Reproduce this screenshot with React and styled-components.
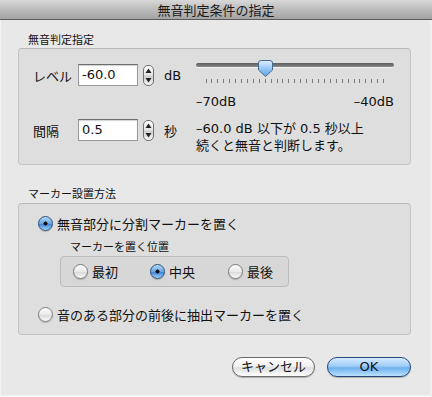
import React from 'react';
import styled, { createGlobalStyle } from 'styled-components';

const GlobalStyle = createGlobalStyle`
	body {
		margin: 0;
		background: #fff;
		font-family: 'DejaVu Sans', 'Noto Sans CJK JP', sans-serif;
		color: #111;
	}
`;

const TICKS = Array.from({ length: 31 });

const Dialog = () => {
	const level = -60;
	const min = -70;
	const max = -40;
	const knobLeft = 10 + ((level - min) / (max - min)) * 179 - 7.5;

	return (
		<Window>
			<GlobalStyle />
			<TitleBar>無音判定条件の指定</TitleBar>
			<Body>
				<GroupLabel>無音判定指定</GroupLabel>
				<Box>
					<LeftCol>
						<FieldRow>
							<FieldLabel>レベル</FieldLabel>
							<TextField>-60.0</TextField>
							<Stepper />
							<Unit>dB</Unit>
						</FieldRow>
						<FieldRow>
							<FieldLabel>間隔</FieldLabel>
							<TextField>0.5</TextField>
							<Stepper />
							<Unit>秒</Unit>
						</FieldRow>
					</LeftCol>
					<RightCol>
						<SliderWrap>
							<Track />
							<Ticks>
								{TICKS.map((_, i) => (
									<Tick key={i} />
								))}
							</Ticks>
							<Knob style={{ left: knobLeft }}>
								<svg width="15" height="17" viewBox="0 0 15 17">
									<defs>
										<linearGradient id="kg" x1="0" y1="0" x2="0" y2="1">
											<stop offset="0" stopColor="#e2f1ff" />
											<stop offset="0.45" stopColor="#9ccbf5" />
											<stop offset="1" stopColor="#5aa2e8" />
										</linearGradient>
									</defs>
									<path
										d="M3 0.5 H12 Q14.5 0.5 14.5 3 V10 L7.5 16.5 L0.5 10 V3 Q0.5 0.5 3 0.5 Z"
										fill="url(#kg)"
										stroke="#47698f"
									/>
								</svg>
							</Knob>
						</SliderWrap>
						<RangeLabels>
							<span>–70dB</span>
							<span>–40dB</span>
						</RangeLabels>
						<Description>
							–60.0 dB 以下が 0.5 秒以上
							<br />
							続くと無音と判断します。
						</Description>
					</RightCol>
				</Box>

				<GroupLabel $top={21}>マーカー設置方法</GroupLabel>
				<Box $column $height={132}>
					<RadioRow>
						<Radio $checked />
						<span>無音部分に分割マーカーを置く</span>
					</RadioRow>
					<SubLabel>マーカーを置く位置</SubLabel>
					<SubBox>
						<RadioRow>
							<Radio />
							<span>最初</span>
						</RadioRow>
						<RadioRow>
							<Radio $checked />
							<span>中央</span>
						</RadioRow>
						<RadioRow>
							<Radio />
							<span>最後</span>
						</RadioRow>
					</SubBox>
					<RadioRow $top={19}>
						<Radio />
						<span>音のある部分の前後に抽出マーカーを置く</span>
					</RadioRow>
				</Box>

				<ButtonBar>
					<PushButton>キャンセル</PushButton>
					<PushButton $default>OK</PushButton>
				</ButtonBar>
			</Body>
		</Window>
	);
};

const Stepper = () => (
	<StepperBox>
		<svg width="11" height="21" viewBox="0 0 11 21">
			<path d="M5.5 3.5 L8.5 8 H2.5 Z" fill="#222" />
			<path d="M5.5 17.5 L8.5 13 H2.5 Z" fill="#222" />
		</svg>
	</StepperBox>
);

const Window = styled.div`
	width: 432px;
	height: 397px;
	box-sizing: border-box;
	background: #e8e8e8;
	border-left: 1px solid #f4f4f4;
	border-right: 2px solid #f4eef0;
	border-bottom: 2px solid #f6f6f6;
	display: flex;
	flex-direction: column;
`;

const TitleBar = styled.div`
	height: 19px;
	border-bottom: 1px solid #5c5c5c;
	margin: 0 -2px 0 -1px;
	background: linear-gradient(#d8d8d8, #b9b9b9 55%, #a3a3a3);
	font-family: 'Noto Sans CJK JP', sans-serif;
	font-size: 13px;
	line-height: 19px;
	text-align: center;
	color: #1a1a1a;
`;

const Body = styled.div`
	padding: 0 19px 0 17px;
	display: flex;
	flex-direction: column;
`;

const GroupLabel = styled.div`
	margin: ${(p) => p.$top || 12}px 0 ${(p) => (p.$top ? 2 : 1)}px 10px;
	height: 15px;
	font-family: 'Noto Sans CJK JP', sans-serif;
	font-size: 11px;
	line-height: 15px;
	color: #111;
`;

const Box = styled.div`
	height: ${(p) => p.$height || 117}px;
	box-sizing: border-box;
	border: 1px solid #c3c3c3;
	border-top-color: #b8b8b8;
	border-radius: 4px;
	background: #dedede;
	display: flex;
	flex-direction: ${(p) => (p.$column ? 'column' : 'row')};
	align-items: flex-start;
	padding: ${(p) => (p.$column ? '11px 0 0 19px' : '0')};
`;

const LeftCol = styled.div`
	width: 176px;
	box-sizing: border-box;
	padding: 15px 0 0 14px;
	display: flex;
	flex-direction: column;
	gap: 33px;
`;

const FieldRow = styled.div`
	display: flex;
	align-items: center;
	height: 22px;
`;

const FieldLabel = styled.span`
	width: 45px;
	font-family: 'Noto Sans CJK JP', sans-serif;
	font-size: 13px;
`;

const TextField = styled.div`
	width: 60px;
	height: 22px;
	box-sizing: border-box;
	background: #fff;
	border: 1px solid #9a9a9a;
	border-top-color: #6e6e6e;
	box-shadow: inset 0 1px 1px rgba(0, 0, 0, 0.18);
	padding: 0 3px;
	font-size: 13px;
	line-height: 19px;
`;

const StepperBox = styled.div`
	width: 11px;
	height: 21px;
	margin-left: 5px;
	box-sizing: border-box;
	border: 1px solid #6f6f6f;
	border-radius: 5px;
	background: linear-gradient(#ffffff, #e6e6e6 45%, #d0d0d0 55%, #f4f4f4);
	display: flex;
	svg {
		margin: -1px;
	}
`;

const Unit = styled.span`
	margin-left: 10px;
	font-size: 13px;
	font-family: 'DejaVu Sans', 'Noto Sans CJK JP', sans-serif;
`;

const RightCol = styled.div`
	width: 198px;
	margin-left: auto;
	margin-right: 16px;
	padding-top: 8px;
	display: flex;
	flex-direction: column;
`;

const SliderWrap = styled.div`
	position: relative;
	height: 26px;
`;

const Track = styled.div`
	margin-top: 6px;
	height: 4px;
	border-radius: 2px;
	background: linear-gradient(#5d5d5d, #8a8a8a);
	box-shadow: 0 1px 0 #f2f2f2;
`;

const Ticks = styled.div`
	margin-top: 12px;
	height: 4px;
	padding: 0 9.5px 0 9.5px;
	display: flex;
	justify-content: space-between;
`;

const Tick = styled.div`
	width: 1px;
	height: 4px;
	background: #7a7a7a;
`;

const Knob = styled.div`
	position: absolute;
	top: 3px;
	width: 15px;
	height: 17px;
	svg {
		display: block;
	}
`;

const RangeLabels = styled.div`
	margin-top: 11px;
	display: flex;
	justify-content: space-between;
	font-size: 13px;
	line-height: 16px;
`;

const Description = styled.div`
	margin-top: 10px;
	font-size: 13px;
	line-height: 17px;
	white-space: nowrap;
`;

const RadioRow = styled.div`
	margin-top: ${(p) => p.$top || 0}px;
	height: 16px;
	display: flex;
	align-items: center;
	gap: 4px;
	font-family: 'Noto Sans CJK JP', sans-serif;
	font-size: 13px;
	color: #111;
`;

const Radio = styled.span`
	width: 15px;
	height: 15px;
	box-sizing: border-box;
	border-radius: 50%;
	border: 1px solid ${(p) => (p.$checked ? '#2f5079' : '#7d7d7d')};
	background: ${(p) =>
		p.$checked
			? 'radial-gradient(circle at 50% 50%, #111 0 1.8px, transparent 2.3px), linear-gradient(#b7d8f7, #6aa6e3 50%, #3b84d6 55%, #9fd0fb)'
			: 'linear-gradient(#fdfdfd, #e9e9e9 50%, #d9d9d9 55%, #fafafa)'};
	box-shadow: 0 1px 1px rgba(0, 0, 0, 0.2);
`;

const SubLabel = styled.div`
	margin: 8px 0 0 32px;
	height: 14px;
	font-family: 'Noto Sans CJK JP', sans-serif;
	font-size: 11px;
	line-height: 14px;
`;

const SubBox = styled.div`
	margin: 3px 0 0 22px;
	width: 229px;
	height: 31px;
	box-sizing: border-box;
	border: 1px solid #bcbcbc;
	border-radius: 4px;
	background: #d7d7d7;
	display: grid;
	grid-template-columns: 77px 78px auto;
	align-items: center;
	padding-left: 12px;
`;

const ButtonBar = styled.div`
	margin-top: 22px;
	display: flex;
	justify-content: flex-end;
	gap: 12px;
`;

const PushButton = styled.div`
	width: ${(p) => (p.$default ? 84 : 83)}px;
	height: 20px;
	box-sizing: border-box;
	border-radius: 10px;
	border: 1px solid ${(p) => (p.$default ? '#26467a' : '#6a6a6a')};
	background: ${(p) =>
		p.$default
			? 'linear-gradient(#d4ebff, #9fcdf7 45%, #6fb0ee 55%, #b9e2ff)'
			: 'linear-gradient(#ffffff, #f1f1f1 45%, #dedede 55%, #ffffff)'};
	box-shadow: 0 1px 1px rgba(0, 0, 0, 0.25);
	font-family: 'DejaVu Sans', 'Noto Sans CJK JP', sans-serif;
	font-size: 13px;
	line-height: 18px;
	text-align: center;
	color: #111;
`;

export default function App() {
	return <Dialog />;
}
